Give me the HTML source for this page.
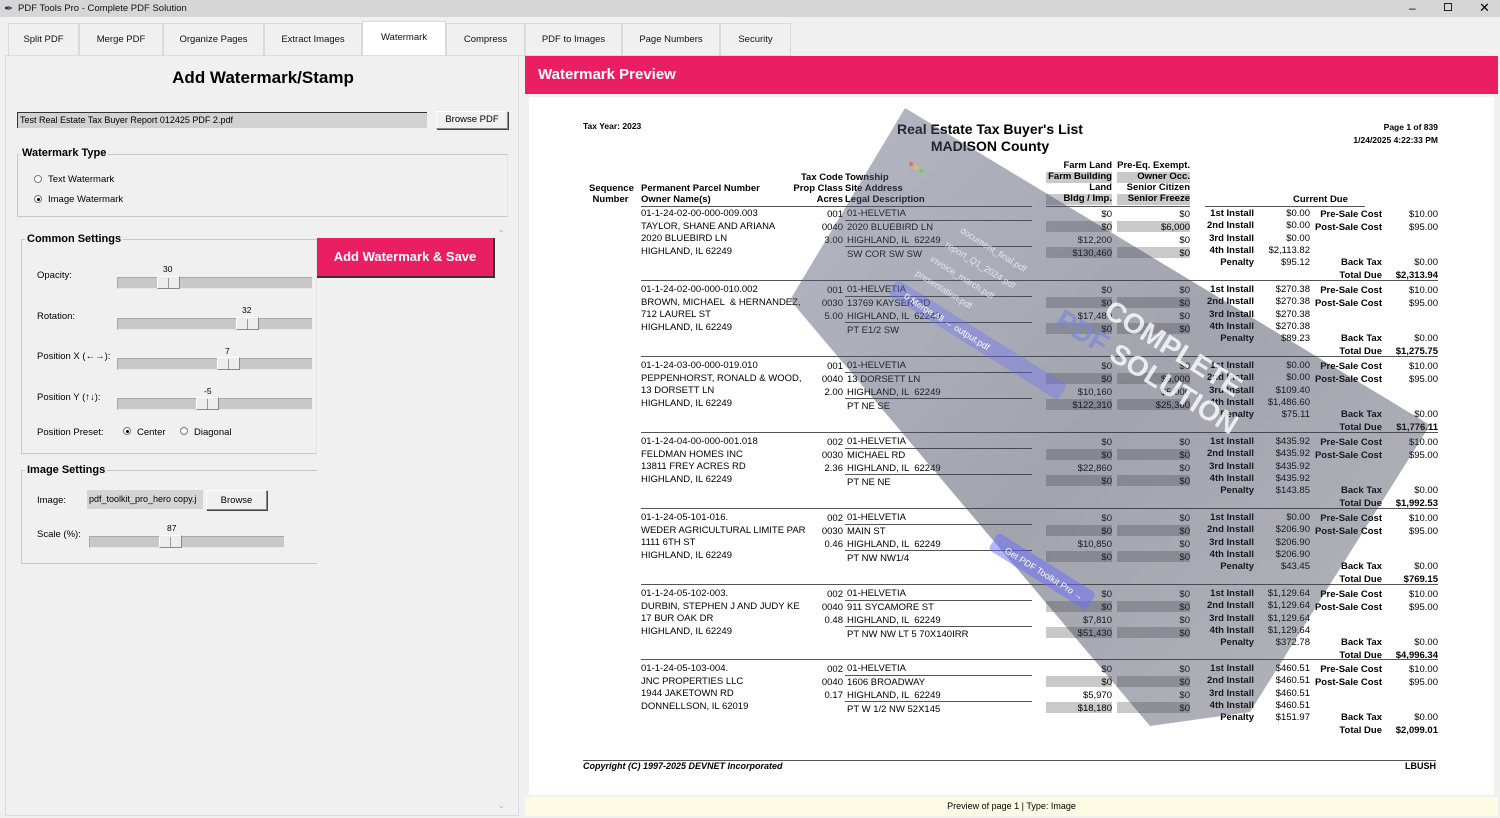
<!DOCTYPE html>
<html><head><meta charset="utf-8"><style>
*{margin:0;padding:0;box-sizing:border-box}
body{width:1500px;height:818px;position:relative;overflow:hidden;background:#f0f0f0;font-family:"Liberation Sans",sans-serif;color:#000}
.a{position:absolute;white-space:nowrap}
.t{position:absolute;white-space:nowrap;font-size:9.5px;line-height:11px}
.b{font-weight:bold}
.tab{position:absolute;top:23px;height:33px;border:1px solid #d9d9d9;background:#f0f0f0;font-size:9.5px;text-align:center;line-height:32px;color:#111}
.grp{position:absolute;border:1px solid #c8c8c8;border-right-color:#e4e4e4}
.gl{position:absolute;background:#f0f0f0;font-size:11px;font-weight:bold;padding:0 2px;line-height:13px}
.trough{position:absolute;height:12px;background:#c8c8c8;border-top:1px solid #a8a8a8;border-left:1px solid #a8a8a8;border-bottom:1px solid #e8e8e8}
.thumb{position:absolute;top:-2px;width:23px;height:13px;background:#ececec;border:1px solid #888;border-top-color:#fff;border-left-color:#fff}
.thumb:after{content:"";position:absolute;left:10px;top:1px;width:1px;height:10px;background:#999}
.lbl{position:absolute;font-size:9.5px;line-height:11px;white-space:nowrap}
.rad{position:absolute;width:8px;height:8px;border-radius:50%;border:1px solid #777;background:#fff}
.rad.on:after{content:"";position:absolute;left:1.5px;top:1.5px;width:3px;height:3px;border-radius:50%;background:#000}
.btn{position:absolute;background:#f0f0f0;border:1px solid #888;border-top-color:#fff;border-left-color:#fff;box-shadow:1px 1px 0 #444;font-size:9.5px;text-align:center}
.rec{position:absolute;left:0;width:1500px;height:72px}
.g{position:absolute;background:#c9c9c9;height:11px}
.hl{position:absolute;height:1px;background:#555}
</style></head><body>
<div class="a" style="left:0;top:0;width:1500px;height:17px;background:#d6d6d6"></div>
<div class="a" style="left:4px;top:2px;font-size:11px;color:#335">&#10002;</div>
<div class="a" style="left:18px;top:3px;font-size:9.5px;color:#111">PDF Tools Pro - Complete PDF Solution</div>
<div class="a" style="left:1409px;top:1px;font-size:12px">&#8211;</div>
<div class="a" style="left:1444px;top:3px;width:8px;height:8px;border:1px solid #222"></div>
<div class="a" style="left:1479px;top:0px;font-size:13px">&#10005;</div>
<div class="tab" style="left:8px;width:71px">Split PDF</div>
<div class="tab" style="left:79px;width:84px">Merge PDF</div>
<div class="tab" style="left:163px;width:101px">Organize Pages</div>
<div class="tab" style="left:264px;width:98px">Extract Images</div>
<div class="tab" style="left:362px;top:21px;height:35px;width:84px;background:#fff;line-height:32px;border-bottom:none">Watermark</div>
<div class="tab" style="left:446px;width:79px">Compress</div>
<div class="tab" style="left:525px;width:97px">PDF to Images</div>
<div class="tab" style="left:622px;width:98px">Page Numbers</div>
<div class="tab" style="left:720px;width:71px">Security</div>
<div class="a" style="left:5px;top:55px;width:514px;height:761px;border:1px solid #ddd;background:#f0f0f0"></div>
<div class="a b" style="left:5px;width:516px;top:68px;text-align:center;font-size:17px">Add Watermark/Stamp</div>
<div class="a" style="left:17px;top:112px;width:410px;height:16px;background:#d2d2d2;border-top:1px solid #333;border-left:1px solid #333;font-size:9px;line-height:14px;padding-left:2px">Test Real Estate Tax Buyer Report 012425 PDF 2.pdf</div>
<div class="btn" style="left:436px;top:111px;width:72px;height:18px;line-height:16px">Browse PDF</div>
<div class="grp" style="left:17px;top:154px;width:491px;height:63px"></div>
<div class="gl" style="left:20px;top:147px">Watermark Type</div>
<div class="rad" style="left:34px;top:175px"></div><div class="lbl" style="left:48px;top:174px">Text Watermark</div>
<div class="rad on" style="left:34px;top:195px"></div><div class="lbl" style="left:48px;top:194px">Image Watermark</div>
<div class="grp" style="left:21px;top:240px;width:296px;height:214px;border-top:none"></div>
<div class="a" style="left:21px;top:239px;width:296px;height:1px;background:#c8c8c8"></div>
<div class="gl" style="left:25px;top:233px">Common Settings</div>
<div class="a" style="left:317px;top:238px;width:178px;height:40px;background:#e91e63;border-right:2px solid #333;border-bottom:2px solid #333;color:#fff;font-weight:bold;font-size:13px;text-align:center;line-height:38px">Add Watermark &amp; Save</div>
<div class="lbl" style="left:37px;top:270px">Opacity:</div>
<div class="lbl" style="left:163px;top:264px;font-size:8.5px">30</div>
<div class="trough" style="left:117px;top:277px;width:195px"><div class="thumb" style="left:39px"></div></div>
<div class="lbl" style="left:37px;top:311px">Rotation:</div>
<div class="lbl" style="left:242px;top:305px;font-size:8.5px">32</div>
<div class="trough" style="left:117px;top:318px;width:195px"><div class="thumb" style="left:118px"></div></div>
<div class="lbl" style="left:37px;top:351px">Position X (←→):</div>
<div class="lbl" style="left:225px;top:346px;font-size:8.5px">7</div>
<div class="trough" style="left:117px;top:358px;width:195px"><div class="thumb" style="left:99px"></div></div>
<div class="lbl" style="left:37px;top:392px">Position Y (↑↓):</div>
<div class="lbl" style="left:204px;top:386px;font-size:8.5px">-5</div>
<div class="trough" style="left:117px;top:398px;width:195px"><div class="thumb" style="left:78px"></div></div>
<div class="lbl" style="left:37px;top:427px">Position Preset:</div>
<div class="rad on" style="left:123px;top:427px"></div><div class="lbl" style="left:137px;top:427px">Center</div>
<div class="rad" style="left:180px;top:427px"></div><div class="lbl" style="left:194px;top:427px">Diagonal</div>
<div class="grp" style="left:21px;top:470px;width:296px;height:94px;border-right:none"></div>
<div class="gl" style="left:25px;top:464px">Image Settings</div>
<div class="lbl" style="left:37px;top:495px">Image:</div>
<div class="a" style="left:87px;top:490px;width:116px;height:19px;background:#d4d4d4;font-size:9px;line-height:19px;padding-left:2px;overflow:hidden">pdf_toolkit_pro_hero copy.j</div>
<div class="btn" style="left:206px;top:490px;width:61px;height:20px;line-height:19px">Browse</div>
<div class="lbl" style="left:37px;top:529px">Scale (%):</div>
<div class="lbl" style="left:167px;top:523px;font-size:8.5px">87</div>
<div class="trough" style="left:89px;top:536px;width:195px"><div class="thumb" style="left:69px"></div></div>
<div class="a" style="left:498px;top:229px;font-size:8px;color:#aaa">&#8963;</div>
<div class="a" style="left:498px;top:801px;font-size:8px;color:#aaa">&#8964;</div>
<div class="a" style="left:525px;top:56px;width:973px;height:38px;background:#e91e63"></div>
<div class="a b" style="left:538px;top:66px;font-size:15px;color:#fff">Watermark Preview</div>
<div class="a" style="left:529px;top:97px;width:965px;height:698px;background:#fff"></div>
<div class="a" style="left:525px;top:797px;width:973px;height:19px;background:#fdfbe3"></div>
<div class="a" style="left:525px;width:973px;top:801px;text-align:center;font-size:9px">Preview of page 1 | Type: Image</div>
<div class="t b" style="left:583px;top:121px;font-size:8.5px">Tax Year: 2023</div>
<div class="a b" style="left:850px;width:280px;text-align:center;top:121px;font-size:14px;line-height:17px">Real Estate Tax Buyer's List<br>MADISON County</div>
<div class="t b" style="right:62px;top:121px;font-size:8.5px;text-align:right;line-height:13px">Page 1 of 839<br>1/24/2025 4:22:33 PM</div>
<div class="t b" style="left:589px;top:183px;text-align:center;width:43px">Sequence<br>Number</div>
<div class="t b" style="left:641px;top:183px">Permanent Parcel Number<br>Owner Name(s)</div>
<div class="t b" style="right:657px;top:172px;text-align:right">Tax Code<br>Prop Class<br>Acres</div>
<div class="t b" style="left:845px;top:172px">Township<br>Site Address<br>Legal Description</div>
<div class="g" style="left:1046px;top:172px;width:66px"></div><div class="g" style="left:1046px;top:194px;width:66px"></div>
<div class="g" style="left:1117px;top:172px;width:73px"></div><div class="g" style="left:1117px;top:194px;width:73px"></div>
<div class="t b" style="right:388px;top:160px;text-align:right">Farm Land<br>Farm Building<br>Land<br>Bldg / Imp.</div>
<div class="t b" style="right:310px;top:160px;text-align:right">Pre-Eq. Exempt.<br>Owner Occ.<br>Senior Citizen<br>Senior Freeze</div>
<div class="t b" style="left:1293px;top:194px">Current Due</div>
<div class="hl" style="left:641px;top:206px;width:391px"></div>
<div class="hl" style="left:1046px;top:206px;width:144px"></div>
<div class="hl" style="left:1205px;top:206px;width:160px"></div>

<div class="rec" style="top:208px">
<div class="t" style="left:641px;top:0;line-height:12.7px">01-1-24-02-00-000-009.003<br>TAYLOR, SHANE AND ARIANA<br>2020 BLUEBIRD LN<br>HIGHLAND, IL 62249</div>
<div class="t" style="right:657px;top:0;text-align:right;line-height:13px">001<br>0040<br>3.00</div>
<div class="t" style="left:847px;top:0">01-HELVETIA</div><div class="hl" style="left:845px;top:12px;width:187px"></div>
<div class="t" style="left:847px;top:14px;line-height:12.5px">2020 BLUEBIRD LN<br>HIGHLAND, IL &nbsp;62249</div><div class="hl" style="left:845px;top:38px;width:187px"></div>
<div class="t" style="left:847px;top:41px">SW COR SW SW</div>
<div class="g" style="left:1046px;top:13px;width:66px"></div><div class="g" style="left:1046px;top:39px;width:66px"></div>
<div class="g" style="left:1117px;top:13px;width:73px"></div><div class="g" style="left:1117px;top:39px;width:73px"></div>
<div class="t" style="right:388px;top:0;text-align:right;line-height:13px">$0<br>$0<br>$12,200<br>$130,460</div>
<div class="t" style="right:310px;top:0;text-align:right;line-height:13px">$0<br>$6,000<br>$0<br>$0</div>
<div class="t b" style="right:246px;top:0;text-align:right;line-height:12.3px">1st Install<br>2nd Install<br>3rd Install<br>4th Install<br>Penalty</div>
<div class="t" style="right:190px;top:0;text-align:right;line-height:12.3px">$0.00<br>$0.00<br>$0.00<br>$2,113.82<br>$95.12</div>
<div class="t b" style="right:118px;top:0;text-align:right;line-height:13px">Pre-Sale Cost<br>Post-Sale Cost</div>
<div class="t" style="right:62px;top:0;text-align:right;line-height:13px">$10.00<br>$95.00</div>
<div class="t b" style="right:118px;top:48px;text-align:right;line-height:13px">Back Tax<br>Total Due</div>
<div class="t" style="right:62px;top:48px;text-align:right;line-height:13px">$0.00<br><b>$2,313.94</b></div>
</div>

<div class="rec" style="top:284px">
<div class="hl" style="left:641px;top:-4px;width:797px"></div>
<div class="t" style="left:641px;top:0;line-height:12.7px">01-1-24-02-00-000-010.002<br>BROWN, MICHAEL &nbsp;&amp; HERNANDEZ,<br>712 LAUREL ST<br>HIGHLAND, IL 62249</div>
<div class="t" style="right:657px;top:0;text-align:right;line-height:13px">001<br>0030<br>5.00</div>
<div class="t" style="left:847px;top:0">01-HELVETIA</div><div class="hl" style="left:845px;top:12px;width:187px"></div>
<div class="t" style="left:847px;top:14px;line-height:12.5px">13769 KAYSER RD<br>HIGHLAND, IL &nbsp;62249</div><div class="hl" style="left:845px;top:38px;width:187px"></div>
<div class="t" style="left:847px;top:41px">PT E1/2 SW</div>
<div class="g" style="left:1046px;top:13px;width:66px"></div><div class="g" style="left:1046px;top:39px;width:66px"></div>
<div class="g" style="left:1117px;top:13px;width:73px"></div><div class="g" style="left:1117px;top:39px;width:73px"></div>
<div class="t" style="right:388px;top:0;text-align:right;line-height:13px">$0<br>$0<br>$17,480<br>$0</div>
<div class="t" style="right:310px;top:0;text-align:right;line-height:13px">$0<br>$0<br>$0<br>$0</div>
<div class="t b" style="right:246px;top:0;text-align:right;line-height:12.3px">1st Install<br>2nd Install<br>3rd Install<br>4th Install<br>Penalty</div>
<div class="t" style="right:190px;top:0;text-align:right;line-height:12.3px">$270.38<br>$270.38<br>$270.38<br>$270.38<br>$89.23</div>
<div class="t b" style="right:118px;top:0;text-align:right;line-height:13px">Pre-Sale Cost<br>Post-Sale Cost</div>
<div class="t" style="right:62px;top:0;text-align:right;line-height:13px">$10.00<br>$95.00</div>
<div class="t b" style="right:118px;top:48px;text-align:right;line-height:13px">Back Tax<br>Total Due</div>
<div class="t" style="right:62px;top:48px;text-align:right;line-height:13px">$0.00<br><b>$1,275.75</b></div>
</div>

<div class="rec" style="top:360px">
<div class="hl" style="left:641px;top:-4px;width:797px"></div>
<div class="t" style="left:641px;top:0;line-height:12.7px">01-1-24-03-00-000-019.010<br>PEPPENHORST, RONALD &amp; WOOD,<br>13 DORSETT LN<br>HIGHLAND, IL 62249</div>
<div class="t" style="right:657px;top:0;text-align:right;line-height:13px">001<br>0040<br>2.00</div>
<div class="t" style="left:847px;top:0">01-HELVETIA</div><div class="hl" style="left:845px;top:12px;width:187px"></div>
<div class="t" style="left:847px;top:14px;line-height:12.5px">13 DORSETT LN<br>HIGHLAND, IL &nbsp;62249</div><div class="hl" style="left:845px;top:38px;width:187px"></div>
<div class="t" style="left:847px;top:41px">PT NE SE</div>
<div class="g" style="left:1046px;top:13px;width:66px"></div><div class="g" style="left:1046px;top:39px;width:66px"></div>
<div class="g" style="left:1117px;top:13px;width:73px"></div><div class="g" style="left:1117px;top:39px;width:73px"></div>
<div class="t" style="right:388px;top:0;text-align:right;line-height:13px">$0<br>$0<br>$10,160<br>$122,310</div>
<div class="t" style="right:310px;top:0;text-align:right;line-height:13px">$0<br>$6,000<br>$5,000<br>$25,360</div>
<div class="t b" style="right:246px;top:0;text-align:right;line-height:12.3px">1st Install<br>2nd Install<br>3rd Install<br>4th Install<br>Penalty</div>
<div class="t" style="right:190px;top:0;text-align:right;line-height:12.3px">$0.00<br>$0.00<br>$109.40<br>$1,486.60<br>$75.11</div>
<div class="t b" style="right:118px;top:0;text-align:right;line-height:13px">Pre-Sale Cost<br>Post-Sale Cost</div>
<div class="t" style="right:62px;top:0;text-align:right;line-height:13px">$10.00<br>$95.00</div>
<div class="t b" style="right:118px;top:48px;text-align:right;line-height:13px">Back Tax<br>Total Due</div>
<div class="t" style="right:62px;top:48px;text-align:right;line-height:13px">$0.00<br><b>$1,776.11</b></div>
</div>

<div class="rec" style="top:436px">
<div class="hl" style="left:641px;top:-4px;width:797px"></div>
<div class="t" style="left:641px;top:0;line-height:12.7px">01-1-24-04-00-000-001.018<br>FELDMAN HOMES INC<br>13811 FREY ACRES RD<br>HIGHLAND, IL 62249</div>
<div class="t" style="right:657px;top:0;text-align:right;line-height:13px">002<br>0030<br>2.36</div>
<div class="t" style="left:847px;top:0">01-HELVETIA</div><div class="hl" style="left:845px;top:12px;width:187px"></div>
<div class="t" style="left:847px;top:14px;line-height:12.5px">MICHAEL RD<br>HIGHLAND, IL &nbsp;62249</div><div class="hl" style="left:845px;top:38px;width:187px"></div>
<div class="t" style="left:847px;top:41px">PT NE NE</div>
<div class="g" style="left:1046px;top:13px;width:66px"></div><div class="g" style="left:1046px;top:39px;width:66px"></div>
<div class="g" style="left:1117px;top:13px;width:73px"></div><div class="g" style="left:1117px;top:39px;width:73px"></div>
<div class="t" style="right:388px;top:0;text-align:right;line-height:13px">$0<br>$0<br>$22,860<br>$0</div>
<div class="t" style="right:310px;top:0;text-align:right;line-height:13px">$0<br>$0<br>$0<br>$0</div>
<div class="t b" style="right:246px;top:0;text-align:right;line-height:12.3px">1st Install<br>2nd Install<br>3rd Install<br>4th Install<br>Penalty</div>
<div class="t" style="right:190px;top:0;text-align:right;line-height:12.3px">$435.92<br>$435.92<br>$435.92<br>$435.92<br>$143.85</div>
<div class="t b" style="right:118px;top:0;text-align:right;line-height:13px">Pre-Sale Cost<br>Post-Sale Cost</div>
<div class="t" style="right:62px;top:0;text-align:right;line-height:13px">$10.00<br>$95.00</div>
<div class="t b" style="right:118px;top:48px;text-align:right;line-height:13px">Back Tax<br>Total Due</div>
<div class="t" style="right:62px;top:48px;text-align:right;line-height:13px">$0.00<br><b>$1,992.53</b></div>
</div>

<div class="rec" style="top:512px">
<div class="hl" style="left:641px;top:-4px;width:797px"></div>
<div class="t" style="left:641px;top:0;line-height:12.7px">01-1-24-05-101-016.<br>WEDER AGRICULTURAL LIMITE PAR<br>1111 6TH ST<br>HIGHLAND, IL 62249</div>
<div class="t" style="right:657px;top:0;text-align:right;line-height:13px">002<br>0030<br>0.46</div>
<div class="t" style="left:847px;top:0">01-HELVETIA</div><div class="hl" style="left:845px;top:12px;width:187px"></div>
<div class="t" style="left:847px;top:14px;line-height:12.5px">MAIN ST<br>HIGHLAND, IL &nbsp;62249</div><div class="hl" style="left:845px;top:38px;width:187px"></div>
<div class="t" style="left:847px;top:41px">PT NW NW1/4</div>
<div class="g" style="left:1046px;top:13px;width:66px"></div><div class="g" style="left:1046px;top:39px;width:66px"></div>
<div class="g" style="left:1117px;top:13px;width:73px"></div><div class="g" style="left:1117px;top:39px;width:73px"></div>
<div class="t" style="right:388px;top:0;text-align:right;line-height:13px">$0<br>$0<br>$10,850<br>$0</div>
<div class="t" style="right:310px;top:0;text-align:right;line-height:13px">$0<br>$0<br>$0<br>$0</div>
<div class="t b" style="right:246px;top:0;text-align:right;line-height:12.3px">1st Install<br>2nd Install<br>3rd Install<br>4th Install<br>Penalty</div>
<div class="t" style="right:190px;top:0;text-align:right;line-height:12.3px">$0.00<br>$206.90<br>$206.90<br>$206.90<br>$43.45</div>
<div class="t b" style="right:118px;top:0;text-align:right;line-height:13px">Pre-Sale Cost<br>Post-Sale Cost</div>
<div class="t" style="right:62px;top:0;text-align:right;line-height:13px">$10.00<br>$95.00</div>
<div class="t b" style="right:118px;top:48px;text-align:right;line-height:13px">Back Tax<br>Total Due</div>
<div class="t" style="right:62px;top:48px;text-align:right;line-height:13px">$0.00<br><b>$769.15</b></div>
</div>

<div class="rec" style="top:588px">
<div class="hl" style="left:641px;top:-4px;width:797px"></div>
<div class="t" style="left:641px;top:0;line-height:12.7px">01-1-24-05-102-003.<br>DURBIN, STEPHEN J AND JUDY KE<br>17 BUR OAK DR<br>HIGHLAND, IL 62249</div>
<div class="t" style="right:657px;top:0;text-align:right;line-height:13px">002<br>0040<br>0.48</div>
<div class="t" style="left:847px;top:0">01-HELVETIA</div><div class="hl" style="left:845px;top:12px;width:187px"></div>
<div class="t" style="left:847px;top:14px;line-height:12.5px">911 SYCAMORE ST<br>HIGHLAND, IL &nbsp;62249</div><div class="hl" style="left:845px;top:38px;width:187px"></div>
<div class="t" style="left:847px;top:41px">PT NW NW LT 5 70X140IRR</div>
<div class="g" style="left:1046px;top:13px;width:66px"></div><div class="g" style="left:1046px;top:39px;width:66px"></div>
<div class="g" style="left:1117px;top:13px;width:73px"></div><div class="g" style="left:1117px;top:39px;width:73px"></div>
<div class="t" style="right:388px;top:0;text-align:right;line-height:13px">$0<br>$0<br>$7,810<br>$51,430</div>
<div class="t" style="right:310px;top:0;text-align:right;line-height:13px">$0<br>$0<br>$0<br>$0</div>
<div class="t b" style="right:246px;top:0;text-align:right;line-height:12.3px">1st Install<br>2nd Install<br>3rd Install<br>4th Install<br>Penalty</div>
<div class="t" style="right:190px;top:0;text-align:right;line-height:12.3px">$1,129.64<br>$1,129.64<br>$1,129.64<br>$1,129.64<br>$372.78</div>
<div class="t b" style="right:118px;top:0;text-align:right;line-height:13px">Pre-Sale Cost<br>Post-Sale Cost</div>
<div class="t" style="right:62px;top:0;text-align:right;line-height:13px">$10.00<br>$95.00</div>
<div class="t b" style="right:118px;top:48px;text-align:right;line-height:13px">Back Tax<br>Total Due</div>
<div class="t" style="right:62px;top:48px;text-align:right;line-height:13px">$0.00<br><b>$4,996.34</b></div>
</div>

<div class="rec" style="top:663px">
<div class="hl" style="left:641px;top:-4px;width:797px"></div>
<div class="t" style="left:641px;top:0;line-height:12.7px">01-1-24-05-103-004.<br>JNC PROPERTIES LLC<br>1944 JAKETOWN RD<br>DONNELLSON, IL 62019</div>
<div class="t" style="right:657px;top:0;text-align:right;line-height:13px">002<br>0040<br>0.17</div>
<div class="t" style="left:847px;top:0">01-HELVETIA</div><div class="hl" style="left:845px;top:12px;width:187px"></div>
<div class="t" style="left:847px;top:14px;line-height:12.5px">1606 BROADWAY<br>HIGHLAND, IL &nbsp;62249</div><div class="hl" style="left:845px;top:38px;width:187px"></div>
<div class="t" style="left:847px;top:41px">PT W 1/2 NW 52X145</div>
<div class="g" style="left:1046px;top:13px;width:66px"></div><div class="g" style="left:1046px;top:39px;width:66px"></div>
<div class="g" style="left:1117px;top:13px;width:73px"></div><div class="g" style="left:1117px;top:39px;width:73px"></div>
<div class="t" style="right:388px;top:0;text-align:right;line-height:13px">$0<br>$0<br>$5,970<br>$18,180</div>
<div class="t" style="right:310px;top:0;text-align:right;line-height:13px">$0<br>$0<br>$0<br>$0</div>
<div class="t b" style="right:246px;top:0;text-align:right;line-height:12.3px">1st Install<br>2nd Install<br>3rd Install<br>4th Install<br>Penalty</div>
<div class="t" style="right:190px;top:0;text-align:right;line-height:12.3px">$460.51<br>$460.51<br>$460.51<br>$460.51<br>$151.97</div>
<div class="t b" style="right:118px;top:0;text-align:right;line-height:13px">Pre-Sale Cost<br>Post-Sale Cost</div>
<div class="t" style="right:62px;top:0;text-align:right;line-height:13px">$10.00<br>$95.00</div>
<div class="t b" style="right:118px;top:48px;text-align:right;line-height:13px">Back Tax<br>Total Due</div>
<div class="t" style="right:62px;top:48px;text-align:right;line-height:13px">$0.00<br><b>$2,099.01</b></div>
</div>

<div class="hl" style="left:583px;top:760px;width:853px"></div>
<div class="t b" style="left:583px;top:761px;font-style:italic;font-size:9px">Copyright (C) 1997-2025 DEVNET Incorporated</div>
<div class="t b" style="right:64px;top:761px;font-size:9px">LBUSH</div>

<svg class="a" style="left:0;top:0" width="1500" height="818" viewBox="0 0 1500 818">
<defs><linearGradient id="wg" x1="0" y1="0" x2="1" y2="1">
<stop offset="0" stop-color="#5a607a" stop-opacity="0.45"/>
<stop offset="0.5" stop-color="#30344a" stop-opacity="0.45"/>
<stop offset="1" stop-color="#3a3e50" stop-opacity="0.38"/></linearGradient></defs>
<polygon points="905,108 1430,425 1250,712 1150,726 790,300" fill="url(#wg)"/>
<g transform="translate(1160,370) rotate(32)">
<text x="0" y="-16" text-anchor="middle" font-family="Liberation Sans,sans-serif" font-weight="bold" font-size="28" fill="#fff" fill-opacity="0.8">COMPLETE</text>
<text x="-10" y="18" text-anchor="middle" font-family="Liberation Sans,sans-serif" font-weight="bold" font-size="28" fill="#7c86d8" fill-opacity="0.7">PDF <tspan fill="#fff" fill-opacity="0.8">SOLUTION</tspan></text>
</g>
<g transform="rotate(32 1040 570)"><rect x="985" y="560" width="115" height="20" rx="4" fill="#6a6cff" fill-opacity="0.5"/>
<text x="1000" y="574" font-family="Liberation Sans,sans-serif" font-size="9" fill="#fff">Get PDF Toolkit Pro →</text></g>
<g transform="rotate(32 960 330)"><rect x="880" y="320" width="200" height="18" rx="4" fill="#6a6cff" fill-opacity="0.35"/>
<text x="895" y="333" font-family="Liberation Sans,sans-serif" font-size="9" fill="#fff">0 Merge All → output.pdf</text></g>
<g transform="rotate(32 960 250)" font-family="Liberation Sans,sans-serif" font-size="9" fill="#fff" fill-opacity="0.7">
<text x="950" y="235">document_final.pdf</text><text x="945" y="255">report_Q1_2024.pdf</text><text x="940" y="275">invoice_march.pdf</text><text x="935" y="295">presentation.pdf</text></g>
<circle cx="911" cy="164" r="2" fill="#e66"/><circle cx="916" cy="167" r="2" fill="#eb4"/><circle cx="921" cy="171" r="2" fill="#6c6"/>
</svg>
</body></html>
